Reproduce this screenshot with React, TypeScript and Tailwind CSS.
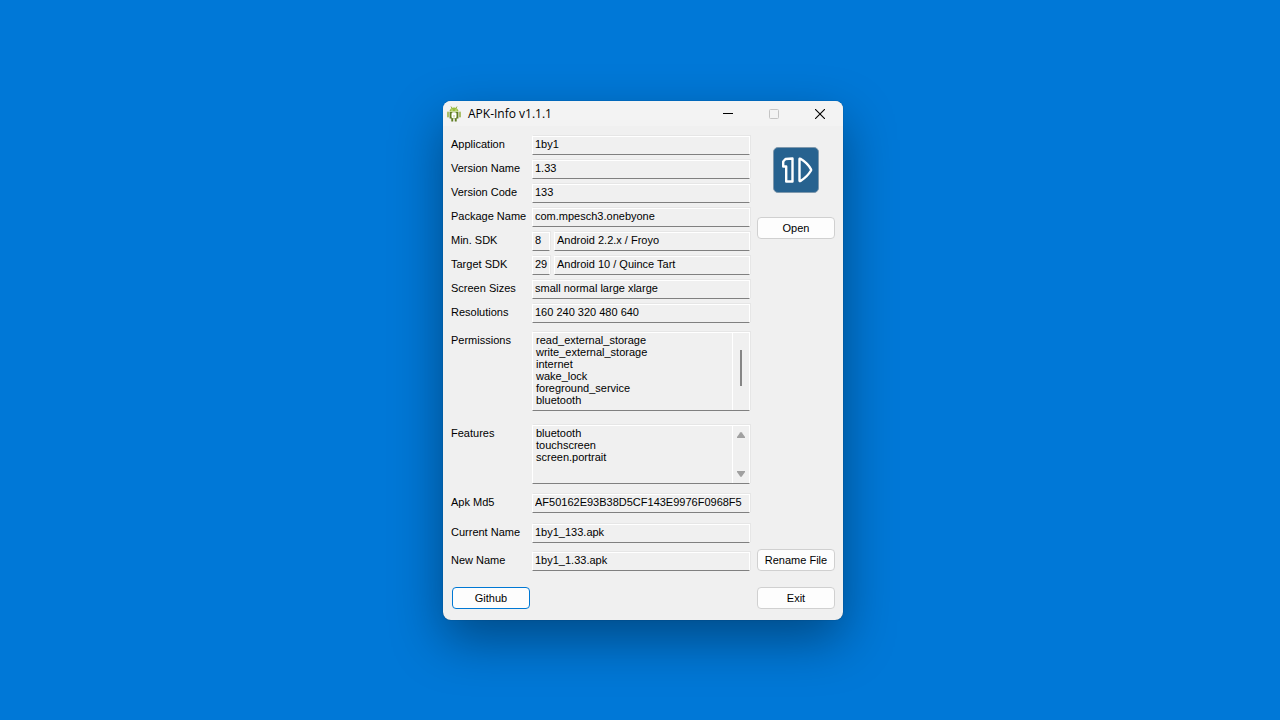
import React, { useState } from 'react';

const fieldClass =
  'h-[19px] min-w-0 border border-t-white border-l-white border-r-white border-b-[#808080] bg-[#f0f0f0] shadow-[1px_-1px_0_#e6e6e6] pl-[2px] pb-[4px] leading-[13px] text-black outline-none';

const buttonClass =
  'h-[22px] w-[78px] rounded-[4px] border bg-[#fdfdfd] text-center leading-[20px] text-black hover:bg-[#e5f1fb]';

const permissions = [
  'read_external_storage',
  'write_external_storage',
  'internet',
  'wake_lock',
  'foreground_service',
  'bluetooth',
];

const features = ['bluetooth', 'touchscreen', 'screen.portrait'];

interface FieldProps {
  id: string;
  label: string;
  value: string;
  className?: string;
}

const Field: React.FC<FieldProps> = ({ id, label, value, className = '' }) => (
  <div className={`flex ${className}`}>
    <label htmlFor={id} className="w-[81px] shrink-0 whitespace-nowrap leading-[16px]">
      {label}
    </label>
    <input id={id} readOnly value={value} className={`${fieldClass} flex-1`} />
  </div>
);

const SdkField: React.FC<FieldProps & { name: string }> = ({ id, label, value, name }) => (
  <div className="flex">
    <label htmlFor={id} className="w-[81px] shrink-0 whitespace-nowrap leading-[16px]">
      {label}
    </label>
    <input id={id} readOnly value={value} className={`${fieldClass} mr-[4px] w-[18px]`} />
    <input aria-label={`${label} name`} readOnly value={name} className={`${fieldClass} flex-1`} />
  </div>
);

interface ListFieldProps {
  id: string;
  label: string;
  items: string[];
  className: string;
  children: React.ReactNode;
}

const ListField: React.FC<ListFieldProps> = ({ id, label, items, className, children }) => (
  <div className={`flex ${className}`}>
    <label htmlFor={id} className="w-[81px] shrink-0 leading-[16px]">
      {label}
    </label>
    <div className="flex min-w-0 flex-1 border border-t-white border-r-white border-b-[#808080] border-l-white shadow-[1px_-1px_0_#e6e6e6]">
      <textarea
        id={id}
        readOnly
        value={items.join('\n')}
        className="min-w-0 flex-1 resize-none overflow-hidden bg-transparent pt-px pl-[3px] leading-[12px] text-black outline-none"
      />
      <div className="flex w-[17px] flex-col items-center border-l border-white">{children}</div>
    </div>
  </div>
);

const AndroidIcon = () => (
  <svg width="14" height="16" viewBox="0 0 14 16" aria-hidden="true">
    <path d="M4 0.500l1 2M10 0.500L9 2.500" stroke="#7d9c2c" strokeWidth="0.8" />
    <path d="M2.500 5.500a4.500 4 0 0 1 9 0z" fill="#9bbf3b" />
    <circle cx="5" cy="4" r="0.6" fill="#fff" />
    <circle cx="9" cy="4" r="0.6" fill="#fff" />
    <rect x="0" y="5.500" width="2" height="6" rx="0.900" fill="#a9bf6a" />
    <rect x="12" y="5.500" width="2" height="6" rx="0.900" fill="#a9bf6a" />
    <path d="M2.600 6h8.800v6.500H9.700V15.500H7.800v-3H6.200v3H4.300v-3H2.600z" fill="#5f7d22" />
    <rect x="4.500" y="6.200" width="5" height="6" rx="1.500" fill="#fff" />
    <path d="M7 9v2.500" stroke="#b5c97e" strokeWidth="1" fill="none" />
  </svg>
);

const AppLogo = () => (
  <svg width="46" height="46" viewBox="0 0 46 46" aria-hidden="true">
    <rect x="0.500" y="0.500" width="45" height="45" rx="4.500" fill="#27628f" stroke="#7f99ad" />
    <g fill="none" stroke="#fff" strokeWidth="2.400" strokeLinejoin="round">
      <path d="M12.500 12L19.500 11.500V34.500H13.200V19.500H10.200V14.500Z" />
      <path d="M26.500 12.200Q26.500 11.300 27.500 11.800Q34.500 16 38 22.300Q38.300 22.900 38 23.500Q34.500 29.500 27.500 34Q26.500 34.500 26.500 33.500Z" />
    </g>
  </svg>
);

const App: React.FC = () => {
  const [open, setOpen] = useState(true);

  return (
    <div className="flex min-h-screen items-center justify-center bg-[#0078d7] pt-px pl-[6px] font-['Liberation_Sans',Arial,sans-serif] text-[11px] text-black">
      {open && (
        <div className="w-full max-w-[400px] overflow-hidden rounded-[8px] bg-[#f0f0f0] shadow-[0_0_1px_rgba(0,0,0,0.5),0_20px_52px_rgba(0,0,0,0.38)]">
          {/* Title bar */}
          <div className="flex h-[25px] items-center bg-[#f3f3f3] pl-[4px]">
            <AndroidIcon />
            <h1 className="ml-[7px] flex-1 font-['Open_Sans',sans-serif] text-[12px] leading-[16px]">APK-Info v1.1.1</h1>
            <button aria-label="Minimize" className="flex h-full w-[46px] items-center justify-center">
              <svg width="10" height="10" viewBox="0 0 10 10" stroke="#000">
                <path d="M0 4.500H10" />
              </svg>
            </button>
            <button aria-label="Maximize" disabled className="flex h-full w-[46px] items-center justify-center">
              <svg width="10" height="10" viewBox="0 0 10 10" fill="none" stroke="#c4c4c4">
                <rect x="0.500" y="0.500" width="9" height="9" rx="1" />
              </svg>
            </button>
            <button
              aria-label="Close"
              onClick={() => setOpen(false)}
              className="flex h-full w-[46px] items-center justify-center hover:bg-[#e81123]"
            >
              <svg width="10" height="10" viewBox="0 0 10 10" stroke="#000" strokeWidth="1.100">
                <path d="M0 0L10 10M10 0L0 10" />
              </svg>
            </button>
          </div>

          {/* Body */}
          <div className="flex gap-[7px] px-[8px] pt-[10px]">
            <div className="min-w-0 flex-1">
              <div className="flex flex-col gap-[5px]">
                <Field id="application" label="Application" value="1by1" />
                <Field id="version-name" label="Version Name" value="1.33" />
                <Field id="version-code" label="Version Code" value="133" />
                <Field id="package-name" label="Package Name" value="com.mpesch3.onebyone" />
                <SdkField id="min-sdk" label="Min. SDK" value="8" name="Android 2.2.x / Froyo" />
                <SdkField id="target-sdk" label="Target SDK" value="29" name="Android 10 / Quince Tart" />
                <Field id="screen-sizes" label="Screen Sizes" value="small normal large xlarge" />
                <Field id="resolutions" label="Resolutions" value="160 240 320 480 640" />
              </div>

              <ListField id="permissions" label="Permissions" items={permissions} className="mt-[9px] h-[79px]">
                <div className="mt-[17px] h-[36px] w-[2px] bg-[#868686]" />
              </ListField>

              <ListField id="features" label="Features" items={features} className="mt-[14px] h-[59px]">
                <svg className="mt-[6px]" width="8" height="6" viewBox="0 0 8 6" fill="#a0a0a0">
                  <path d="M3.200 0.500Q4 -0.300 4.800 0.500L8 5V6H0V5Z" />
                </svg>
                <svg className="mt-auto mb-[6px]" width="8" height="6" viewBox="0 0 8 6" fill="#a0a0a0">
                  <path d="M3.200 5.500Q4 6.300 4.800 5.500L8 1V0H0V1Z" />
                </svg>
              </ListField>

              <Field id="apk-md5" label="Apk Md5" value="AF50162E93B38D5CF143E9976F0968F5" className="mt-[10px]" />
              <Field id="current-name" label="Current Name" value="1by1_133.apk" className="mt-[11px]" />
              <Field id="new-name" label="New Name" value="1by1_1.33.apk" className="mt-[9px]" />
            </div>

            <div className="flex flex-col items-center pt-[11px]">
              <AppLogo />
              <button className={`${buttonClass} mt-[24px] border-[#d0d0d0]`}>Open</button>
              <button className={`${buttonClass} mt-auto border-[#d0d0d0]`}>Rename File</button>
            </div>
          </div>

          {/* Footer */}
          <div className="flex justify-between pt-[16px] pr-[8px] pb-[11px] pl-[9px]">
            <button className={`${buttonClass} border-[#0078d4]`}>Github</button>
            <button className={`${buttonClass} border-[#d0d0d0]`} onClick={() => setOpen(false)}>
              Exit
            </button>
          </div>
        </div>
      )}
    </div>
  );
};

export default App;
